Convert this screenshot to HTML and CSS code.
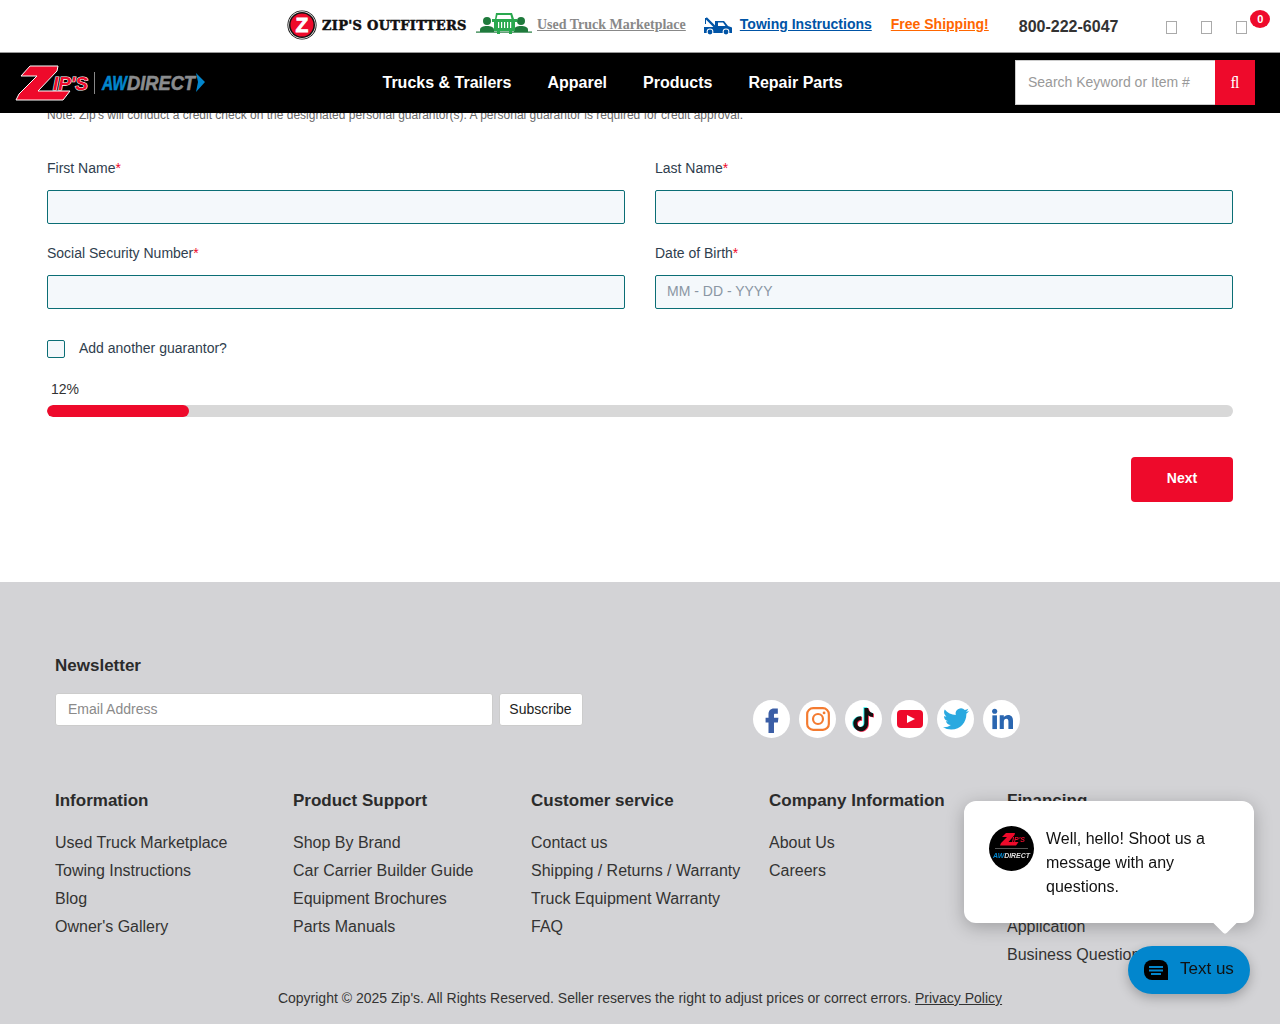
FILE: index.html
```html
<!DOCTYPE html>
<html>
	<head>
		<meta charset="UTF-8">
		<meta name="viewport" content="width=device-width,initial-scale=1">
		<title>Credit Application</title>
		<link rel="stylesheet" href="styles.css">
	</head>
	<body>
		<header class="site-header">
			<div class="topbar">
				<a class="outfitters" href="#">
					<svg class="z-badge" viewBox="0 0 30 30" width="30" height="30">
						<circle cx="15" cy="15" r="14.6" fill="#111"/>
						<circle cx="15" cy="15" r="13.700" fill="#fff"/>
						<circle cx="15" cy="15" r="13" fill="#111"/>
						<circle cx="15" cy="15" r="11.500" fill="#ee0a2b"/>
						<text x="15" y="22" text-anchor="middle" class="z-letter">Z</text>
					</svg>
					<span class="outfitters-name">ZIP'S OUTFITTERS</span>
				</a>
				<a class="marketplace" href="#">
					<svg viewBox="0 0 56 24" width="56" height="24">
						<g fill="#1f7a3c">
							<circle cx="11" cy="9" r="4"/>
							<path d="M4 18c0-3 3-4 7-4s7 1 7 4v2H4z"/>
							<circle cx="45" cy="9" r="4"/>
							<path d="M38 18c0-3 3-4 7-4s7 1 7 4v2H38z"/>
							<rect x="0" y="19.500" width="56" height="1.200"/>
						</g>
						<path fill="#2aa84f" d="M20 1h16l2 6h3v3h-2v9h-3v3h-3v-3H24v3h-3v-3h-3v-9h-2V7h3z"/>
						<path fill="#fff" d="M21.500 3h13l1 4h-15zM22 10h1.200v6H22zM25 10h1.200v6H25zM28 10h1.200v6H28zM31 10h1.200v6H31zM34 10h1.200v6H34z"/>
					</svg>
					<span>Used Truck Marketplace</span>
				</a>
				<a class="towing" href="#">
					<svg viewBox="0 0 30 20" width="30" height="20">
						<path fill="none" stroke="#0054a6" stroke-width="2.400" d="M3 2l9 9"/>
						<path fill="none" stroke="#0054a6" stroke-width="1" d="M2.500 2v6"/>
						<path fill="#0054a6" d="M1 11h11V5h9l4 5 4 1.500V17H1z"/>
						<path fill="#fff" d="M15 6.500h5l2.500 3.500H15z"/>
						<circle cx="7" cy="16" r="3.400" fill="#fff"/>
						<circle cx="7" cy="16" r="2.400" fill="#0054a6"/>
						<circle cx="23" cy="16" r="3.400" fill="#fff"/>
						<circle cx="23" cy="16" r="2.400" fill="#0054a6"/>
					</svg>
					<span>Towing Instructions</span>
				</a>
				<a class="shipping" href="#">Free Shipping!</a>
				<span class="phone">800-222-6047</span>
				<div class="tools">
					<span class="tofu"></span>
					<span class="tofu"></span>
					<span class="tofu cart"><b class="badge">0</b></span>
				</div>
			</div>
			<nav class="mainbar">
				<a class="logo" href="#">
					<svg viewBox="0 0 192 36" width="192" height="36">
						<path fill="#ee0a2b" stroke="#fff" stroke-width="1" d="M15 1h28l-1 5-19 20h32l-7 9H1l3-6 18-18H6z"/>
						<text x="38" y="25" class="logo-zips" textLength="35" lengthAdjust="spacingAndGlyphs">IP'S</text>
						<rect x="79" y="7" width="1" height="22" fill="#888"/>
						<text x="87" y="25" class="logo-aw" textLength="25" lengthAdjust="spacingAndGlyphs">AW</text>
						<text x="112" y="25" class="logo-direct" textLength="68" lengthAdjust="spacingAndGlyphs">DIRECT</text>
						<path fill="#0286cd" d="M181 8l9 9-9 10 2-10z"/>
					</svg>
				</a>
				<ul class="menu">
					<li><a href="#">Trucks &amp; Trailers</a></li>
					<li><a href="#">Apparel</a></li>
					<li><a href="#">Products</a></li>
					<li><a href="#">Repair Parts</a></li>
				</ul>
				<form class="search">
					<input type="text" placeholder="Search Keyword or Item #">
					<button type="button">&#xfb02;</button>
				</form>
			</nav>
		</header>

		<main class="page">
			<p class="note">Note: Zip's will conduct a credit check on the designated personal guarantor(s). A personal guarantor is required for credit approval.</p>
			<div class="fields">
				<div class="field">
					<label>First Name<em>*</em></label>
					<input type="text">
				</div>
				<div class="field">
					<label>Last Name<em>*</em></label>
					<input type="text">
				</div>
				<div class="field">
					<label>Social Security Number<em>*</em></label>
					<input type="text">
				</div>
				<div class="field">
					<label>Date of Birth<em>*</em></label>
					<input type="text" placeholder="MM - DD - YYYY">
				</div>
			</div>
			<label class="another"><span class="box"></span>Add another guarantor?</label>
			<div class="percent">12%</div>
			<div class="progress"><div class="progress-fill" style="width:12%"></div></div>
			<div class="actions"><button type="button" class="next">Next</button></div>
		</main>

		<footer class="footer">
			<div class="news-row">
				<div class="news">
					<h4>Newsletter</h4>
					<form class="news-form">
						<input type="text" placeholder="Email Address">
						<button type="button">Subscribe</button>
					</form>
				</div>
				<div class="social">
					<a href="#"><svg viewBox="0 0 24 24" width="28" height="28"><path fill="#3b5ea6" d="M14.500 7.500H17V3h-3.200C10.500 3 9 5 9 8v3H6.500v4H9v9h4.700v-9H17l.5-4h-3.800V8.500c0-.6.300-1 1-1z"/></svg></a>
					<a href="#"><svg viewBox="0 0 24 24" width="26" height="26"><rect x="2" y="2" width="20" height="20" rx="5.500" fill="none" stroke="#f47b30" stroke-width="2"/><circle cx="12" cy="12" r="4.600" fill="none" stroke="#f47b30" stroke-width="2"/><circle cx="17.600" cy="6.400" r="1.300" fill="#f47b30"/></svg></a>
					<a href="#"><svg viewBox="0 0 24 24" width="28" height="28"><path fill="#25f4ee" d="M11.500 2h3.200c.3 2.500 1.800 4.200 4.300 4.500v3.200c-1.600 0-3-.5-4.300-1.400v7.200c0 3.600-2.900 6.500-6.300 6.500S2 19.200 2 15.800c0-3.600 3.100-6.500 6.900-6.200v3.300c-1.800-.3-3.600 1-3.600 2.900 0 1.700 1.300 3 3 3s3.200-1.300 3.200-3.200z"/><path fill="#fe2c55" d="M13 3h3.200c.3 2.500 1.800 4.200 4.300 4.500v3.200c-1.600 0-3-.5-4.300-1.400v7.200c0 3.600-2.900 6.500-6.300 6.500s-6.400-3.200-6.400-6.600c0-3.600 3.100-6.500 6.900-6.200v3.300c-1.800-.3-3.600 1-3.600 2.900 0 1.700 1.300 3 3 3s3.200-1.300 3.200-3.200z"/><path fill="#111" d="M12.300 2.500h3.200c.3 2.500 1.800 4.200 4.300 4.500v3.200c-1.600 0-3-.5-4.300-1.400v7.200c0 3.600-2.900 6.500-6.300 6.500s-6.400-3.200-6.400-6.600c0-3.600 3.100-6.500 6.900-6.200v3.300c-1.800-.3-3.600 1-3.600 2.900 0 1.700 1.300 3 3 3s3.200-1.300 3.200-3.200z"/></svg></a>
					<a href="#"><svg viewBox="0 0 26 20" width="26" height="20"><rect width="26" height="18" y="1" rx="4" fill="#ee0a2b"/><path fill="#fff" d="M10 6l8 4-8 4z"/></svg></a>
					<a href="#"><svg viewBox="0 0 24 24" width="26" height="26"><path fill="#2aa9e0" d="M23.953 4.570a10 10 0 01-2.825.775 4.958 4.958 0 002.163-2.723c-.951.555-2.005.959-3.127 1.184a4.920 4.920 0 00-8.384 4.482C7.690 8.095 4.067 6.130 1.640 3.162a4.822 4.822 0 00-.666 2.475c0 1.710.870 3.213 2.188 4.096a4.904 4.904 0 01-2.228-.616v.060a4.923 4.923 0 003.946 4.827 4.996 4.996 0 01-2.212.085 4.936 4.936 0 004.604 3.417 9.867 9.867 0 01-6.102 2.105c-.390 0-.779-.023-1.170-.067a13.995 13.995 0 007.557 2.209c9.053 0 13.998-7.496 13.998-13.985 0-.210 0-.420-.015-.630A9.935 9.935 0 0024 4.590z"/></svg></a>
					<a href="#"><svg viewBox="0 0 24 24" width="22" height="22"><g fill="#2a66b0"><circle cx="4" cy="3.500" r="2.800"/><rect x="1.500" y="8" width="5" height="15"/><path d="M9.500 8H14v2.200c.9-1.500 2.500-2.500 4.600-2.500 3.800 0 5.400 2.400 5.400 6.300v9h-5v-8c0-2-.6-3.300-2.300-3.300s-2.700 1.300-2.700 3.300v8h-4.500z"/></g></svg></a>
				</div>
			</div>
			<div class="columns">
				<div class="col">
					<h4>Information</h4>
					<a href="#">Used Truck Marketplace</a>
					<a href="#">Towing Instructions</a>
					<a href="#">Blog</a>
					<a href="#">Owner's Gallery</a>
				</div>
				<div class="col">
					<h4>Product Support</h4>
					<a href="#">Shop By Brand</a>
					<a href="#">Car Carrier Builder Guide</a>
					<a href="#">Equipment Brochures</a>
					<a href="#">Parts Manuals</a>
				</div>
				<div class="col">
					<h4>Customer service</h4>
					<a href="#">Contact us</a>
					<a href="#">Shipping / Returns / Warranty</a>
					<a href="#">Truck Equipment Warranty</a>
					<a href="#">FAQ</a>
				</div>
				<div class="col">
					<h4>Company Information</h4>
					<a href="#">About Us</a>
					<a href="#">Careers</a>
				</div>
				<div class="col">
					<h4>Financing</h4>
					<!-- links behind the chat bubble can't be read -->
					<div class="covered"></div>
					<a href="#">Application</a>
					<a href="#">Business Questionnaire</a>
				</div>
			</div>
			<p class="copyright">Copyright © 2025 Zip's. All Rights Reserved. Seller reserves the right to adjust prices or correct errors. <a href="#">Privacy Policy</a></p>
		</footer>

		<div class="chat-bubble">
			<svg class="chat-avatar" viewBox="0 0 45 45" width="45" height="45">
				<circle cx="22.500" cy="22.500" r="22.500" fill="#000"/>
				<path fill="#ee0a2b" d="M17 7h9l-.5 2-6 7h10l-2.500 3.500H11l1-2.500 6-6h-5z"/>
				<text x="23" y="15.500" class="avatar-zips" textLength="13" lengthAdjust="spacingAndGlyphs">IP'S</text>
				<rect x="6" y="22" width="33" height="1" fill="#555"/>
				<text x="4" y="32" class="avatar-aw" textLength="37" lengthAdjust="spacingAndGlyphs">AW<tspan class="avatar-direct">DIRECT</tspan></text>
			</svg>
			<p>Well, hello! Shoot us a message with any questions.</p>
		</div>
		<button type="button" class="chat-button">
			<svg viewBox="0 0 24 22" width="24" height="22">
				<path fill="#000" d="M8 1h8a8 8 0 0 1 8 8v12H8A8 8 0 0 1 0 13V9a8 8 0 0 1 8-8z"/>
				<path fill="#0286cd" d="M5 7h14v2H5zM5 10.500h14v2H5zM7 14h10v2H7z"/>
			</svg>
			<span>Text us</span>
		</button>
	</body>
</html>
```

FILE: styles.css
```css
* {
	box-sizing: border-box;
}
html, body {
	margin: 0;
	padding: 0;
}
body {
	font-family: "Liberation Sans", Arial, sans-serif;
	color: #333;
	background: #fff;
}
a {
	color: inherit;
	text-decoration: none;
}

/* header */
.site-header {
	position: fixed;
	top: 0;
	left: 0;
	width: 100%;
	z-index: 10;
}
.topbar {
	height: 53px;
	background: #fff;
	border-bottom: 1px solid #999;
	display: flex;
	align-items: center;
	padding-left: 287px;
}
.outfitters {
	display: flex;
	align-items: center;
	gap: 5px;
	margin-right: 8px;
}
.z-badge {
	margin-top: -2px;
}
.z-letter {
	font: bold 21px "Liberation Sans", sans-serif;
	fill: #fff;
	stroke: #fff;
	stroke-width: .8;
}
.outfitters-name {
	font: bold 13px "DejaVu Serif", serif;
	-webkit-text-stroke: .5px #111;
	letter-spacing: .3px;
	color: #111;
	width: 146px;
	white-space: nowrap;
	margin-top: -2px;
}
.marketplace {
	display: flex;
	align-items: center;
	gap: 5px;
	font: bold 14px "Liberation Serif", serif;
	color: #888;
	margin-right: 17px;
}
.marketplace svg {
	margin-top: -4px;
}
.marketplace span {
	margin-top: -2px;
}
.marketplace span,
.towing span,
.shipping {
	text-decoration: underline;
}
.towing {
	display: flex;
	align-items: center;
	gap: 7px;
	font-size: 14px;
	font-weight: bold;
	color: #0054a6;
	margin-right: 19px;
}
.towing span {
	margin-top: -4px;
}
.shipping {
	font-size: 14px;
	font-weight: bold;
	color: #f60;
	margin-top: -4px;
	margin-right: 30px;
}
.phone {
	font-size: 16px;
	font-weight: bold;
	color: #333;
	margin-top: 2px;
	margin-right: 48px;
}
.tools {
	display: flex;
	gap: 24px;
	margin-top: 2px;
}
.tofu {
	display: block;
	position: relative;
	width: 11px;
	height: 13px;
	border: 1px solid #aaa;
}
.badge {
	position: absolute;
	top: -12px;
	left: 13px;
	width: 20px;
	height: 18px;
	border-radius: 50%;
	background: #ee0a2b;
	color: #fff;
	font-size: 11px;
	line-height: 18px;
	text-align: center;
}
.mainbar {
	height: 60px;
	background: #000;
	display: flex;
	align-items: center;
	padding: 0 25px 1px 15px;
}
.logo {
	display: block;
	width: 367.500px;
	height: 36px;
}
.logo-zips {
	font: italic bold 19px "Liberation Sans", sans-serif;
	fill: #ee0a2b;
	stroke: #fff;
	stroke-width: 1.200;
	paint-order: stroke;
}
.logo-aw {
	font: italic bold 20px "Liberation Sans", sans-serif;
	fill: #0286cd;
	stroke: #0286cd;
	stroke-width: .6;
}
.logo-direct {
	font: italic bold 20px "Liberation Sans", sans-serif;
	fill: #8a8c8e;
	stroke: #8a8c8e;
	stroke-width: .6;
}
.menu {
	list-style: none;
	margin: 0;
	padding: 0;
	display: flex;
	gap: 36px;
	flex: 1;
}
.menu a {
	color: #fff;
	font-size: 16px;
	font-weight: bold;
}
.search {
	display: flex;
	width: 240px;
	height: 45px;
	margin: 0;
}
.search input {
	width: 200px;
	border: 1px solid #ccc;
	border-right: 0;
	padding: 0 12px 2px;
	font: 14px "Liberation Sans", sans-serif;
	background: #fff;
}
.search input::placeholder {
	color: #999;
}
.search button {
	width: 40px;
	border: 0;
	background: #ee0a2b;
	color: #fff;
	font: 16px "Liberation Serif", serif;
	padding: 0;
}

/* form */
.page {
	height: 582px;
	padding: 108px 47px 0;
}
.note {
	margin: 0 0 38px;
	font-size: 12px;
	line-height: 14px;
	color: #666;
}
.fields {
	display: grid;
	grid-template-columns: 1fr 1fr;
	column-gap: 30px;
	row-gap: 21px;
}
.field label {
	display: block;
	font-size: 14px;
	line-height: 17px;
	color: #2f3e4e;
	margin-bottom: 13px;
}
.field em {
	color: #ee0a2b;
	font-style: normal;
}
.field input {
	display: block;
	width: 100%;
	height: 34px;
	padding: 0 11px 2px;
	border: 1px solid #0b6e75;
	border-radius: 2px;
	background: #f4f8fb;
	font: 14px "Liberation Sans", sans-serif;
}
.field input::placeholder {
	color: #8a96a3;
}
.another {
	display: flex;
	align-items: flex-start;
	gap: 14px;
	margin-top: 30px;
	font-size: 14px;
	line-height: 18px;
	color: #2f3e4e;
}
.box {
	width: 18px;
	height: 18px;
	margin-top: 1px;
	border: 1px solid #0b6e75;
	border-radius: 2px;
	background: #f4f8fb;
}
.percent {
	margin: 23px 0 0 4px;
	font-size: 14px;
	line-height: 16px;
	color: #333;
}
.progress {
	height: 12px;
	margin-top: 8px;
	border-radius: 6px;
	background: #d8d8d8;
	overflow: hidden;
}
.progress-fill {
	height: 100%;
	border-radius: 6px;
	background: #ee0a2b;
}
.actions {
	display: flex;
	justify-content: flex-end;
	margin-top: 40px;
}
.next {
	width: 102px;
	height: 45px;
	border: 0;
	border-radius: 4px;
	padding: 0 0 3px;
	background: #ee0a2b;
	color: #fff;
	font: bold 14px "Liberation Sans", sans-serif;
}

/* footer */
.footer {
	height: 442px;
	background: #d3d3d6;
	padding: 74px 55px 0;
	overflow: hidden;
}
.footer h4 {
	margin: 0;
	font-size: 17px;
	line-height: 20px;
	color: #2b2b2b;
}
.news-row {
	display: flex;
}
.news {
	width: 698px;
}
.news-form {
	display: flex;
	gap: 6px;
	margin: 17px 0 0;
}
.news-form input {
	width: 438px;
	height: 33px;
	border: 1px solid #ccc;
	border-radius: 3px;
	padding: 0 12px 2px;
	font: 14px "Liberation Sans", sans-serif;
	background: #fff;
}
.news-form input::placeholder {
	color: #8a8a8a;
}
.news-form button {
	width: 84px;
	height: 33px;
	border: 1px solid #ccc;
	border-radius: 3px;
	background: #fff;
	color: #222;
	font: 14px "Liberation Sans", sans-serif;
	padding: 0 1px 2px 0;
}
.social {
	display: flex;
	gap: 9px;
	margin-top: 44px;
}
.social a {
	width: 37px;
	height: 38px;
	border-radius: 50%;
	background: #fff;
	display: flex;
	align-items: center;
	justify-content: center;
}
.columns {
	display: grid;
	grid-template-columns: repeat(5, 238px);
	margin-top: 53px;
}
.col a {
	display: block;
	font-size: 16px;
	line-height: 28px;
	color: #333;
	white-space: nowrap;
}
.col h4 {
	margin-bottom: 18px;
}
.covered {
	height: 84px;
}
.copyright {
	margin: 20px 0 0;
	text-align: center;
	font-size: 14px;
	line-height: 18px;
	color: #333;
}
.copyright a {
	text-decoration: underline;
}

/* chat widget */
.chat-bubble {
	position: fixed;
	left: 964px;
	top: 801px;
	width: 290px;
	height: 122px;
	display: flex;
	gap: 12px;
	padding: 25px 25px 0;
	background: #fff;
	border-radius: 12px;
	box-shadow: 0 4px 18px rgba(0,0,0,.25);
	z-index: 20;
}
.chat-bubble:after {
	content: "";
	position: absolute;
	left: 252px;
	bottom: -8px;
	width: 18px;
	height: 18px;
	background: #fff;
	transform: rotate(45deg);
	border-radius: 3px;
}
.chat-bubble p {
	margin: 1px 0 0;
	font-size: 16px;
	line-height: 24px;
	color: #111;
}
.chat-avatar {
	flex: none;
}
.avatar-zips {
	font: italic bold 7px "Liberation Sans", sans-serif;
	fill: #ee0a2b;
}
.avatar-aw {
	font: italic bold 7px "Liberation Sans", sans-serif;
	fill: #0286cd;
}
.avatar-direct {
	fill: #ddd;
}
.chat-button {
	position: fixed;
	left: 1128px;
	top: 946px;
	width: 122px;
	height: 48px;
	display: flex;
	align-items: center;
	gap: 12px;
	padding: 0 0 0 16px;
	border: 0;
	border-radius: 24px;
	background: #0286cd;
	color: #111;
	font: 17px "Liberation Sans", sans-serif;
	box-shadow: 0 4px 12px rgba(0,0,0,.25);
	z-index: 20;
}
.chat-button span {
	margin-top: -3px;
}
```
